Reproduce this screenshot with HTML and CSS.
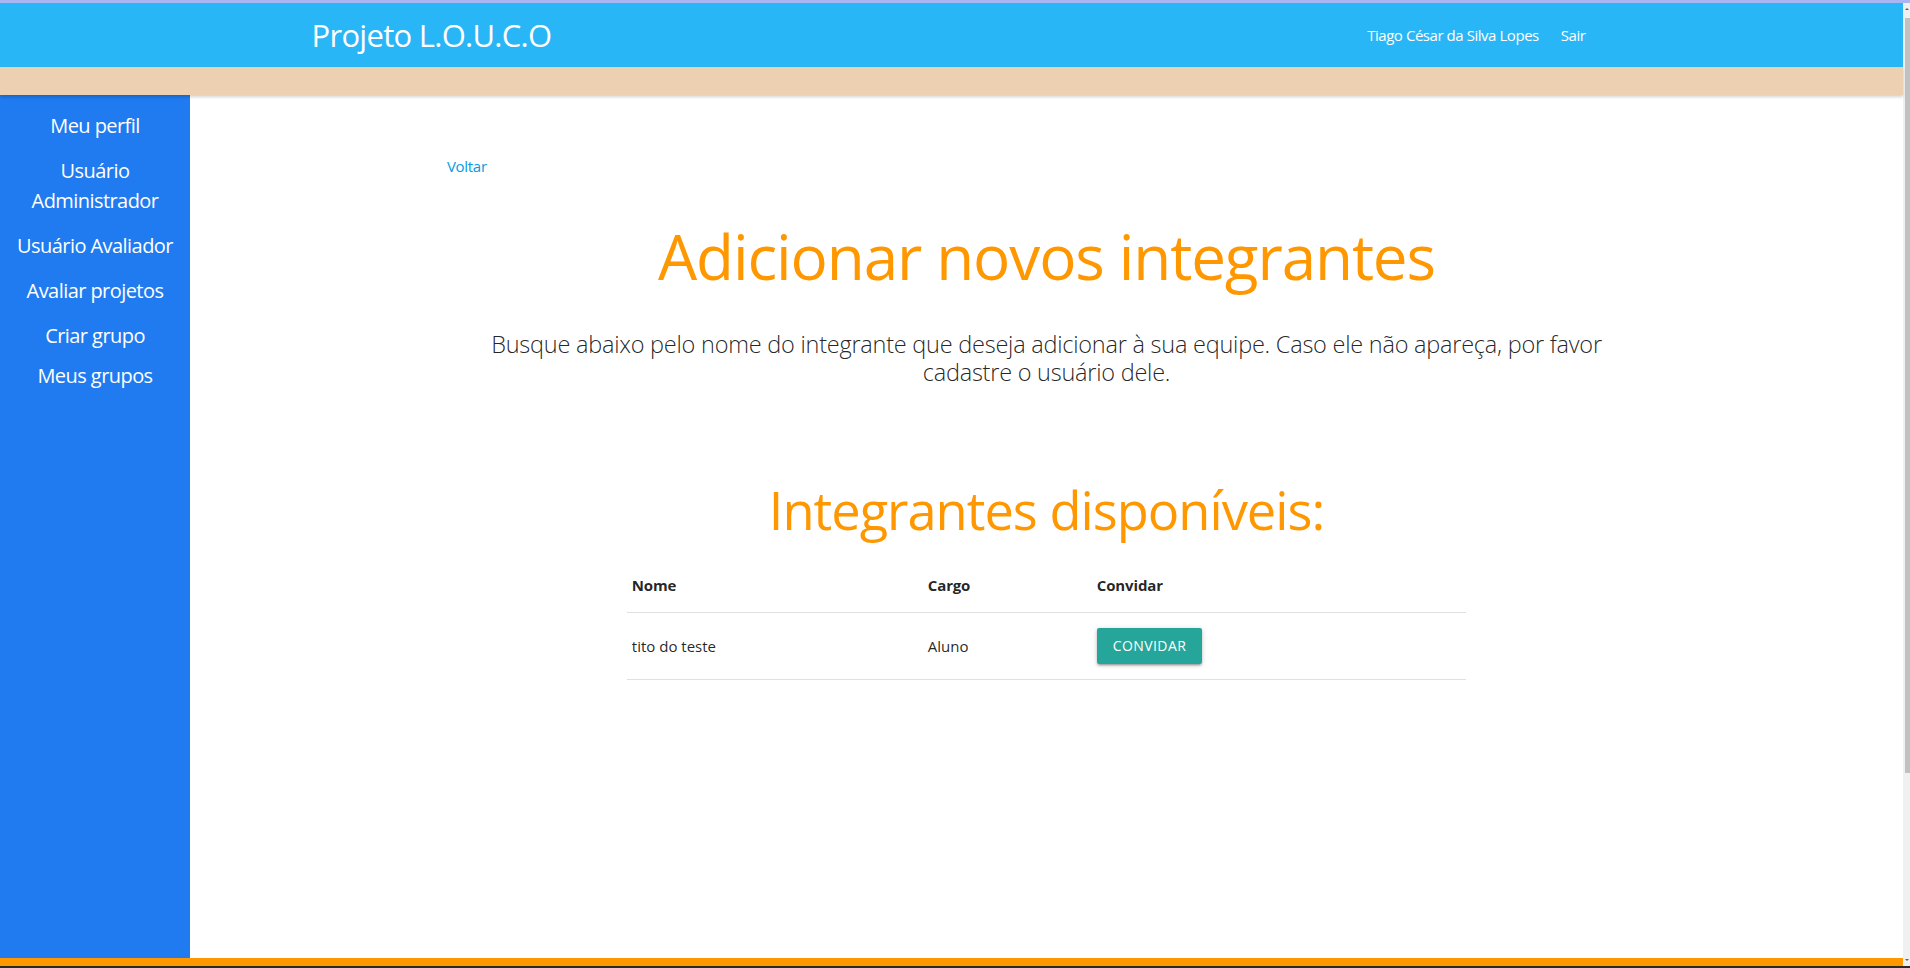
FILE: index.html
```html
<!DOCTYPE html>
<html lang="pt-BR">
<head>
<meta charset="utf-8">
<title>Projeto L.O.U.C.O</title>
<link rel="stylesheet" href="styles.css">
</head>
<body>
<div class="topline"></div>
<div class="frame">
  <div class="page">
    <nav class="navbar">
      <div class="nav-inner">
        <a class="brand" href="#">Projeto L.O.U.C.O</a>
        <ul class="nav-links">
          <li><a href="#">Tiago César da Silva Lopes</a></li>
          <li><a href="#">Sair</a></li>
        </ul>
      </div>
    </nav>
    <div class="subbar"></div>
    <div class="middle">
      <aside class="sidebar">
        <ul class="side-menu">
          <li><a href="#">Meu perfil</a></li>
          <li><a href="#">Usuário Administrador</a></li>
          <li><a href="#">Usuário Avaliador</a></li>
          <li><a href="#">Avaliar projetos</a></li>
          <li><a href="#">Criar grupo</a></li>
          <li class="side-last"><a href="#">Meus grupos</a></li>
        </ul>
      </aside>
      <main class="main">
        <div class="container">
          <a class="back" href="#">Voltar</a>
          <h1 class="title">Adicionar novos integrantes</h1>
          <p class="lead">Busque abaixo pelo nome do integrante que deseja adicionar à sua equipe. Caso ele não apareça, por favor<br>cadastre o usuário dele.</p>
          <h2 class="subtitle">Integrantes disponíveis:</h2>
          <table class="members">
            <thead>
              <tr><th class="col-name">Nome</th><th class="col-role">Cargo</th><th>Convidar</th></tr>
            </thead>
            <tbody>
              <tr><td>tito do teste</td><td>Aluno</td><td><a class="btn" href="#">Convidar</a></td></tr>
            </tbody>
          </table>
        </div>
      </main>
    </div>
    <footer class="footer"></footer>
  </div>
  <div class="scrollbar">
    <div class="sb-arrow sb-up"></div>
    <div class="sb-track"><div class="sb-thumb"></div></div>
    <div class="sb-arrow sb-down"></div>
  </div>
</div>
<div class="taskbar"></div>
</body>
</html>
```
FILE: styles.css
```css
* { box-sizing: border-box; }
html, body { height: 100%; }
body {
  margin: 0;
  height: 968px;
  overflow: hidden;
  display: flex;
  flex-direction: column;
  font-family: "Open Sans", "Noto Sans", sans-serif;
  color: rgba(0,0,0,0.87);
  background: #fff;
}
a { text-decoration: none; }

.topline { height: 3px; background: #aab6f2; flex: none; }
.taskbar { height: 2px; background: #2a2a2a; flex: none; }

.frame { flex: 1; display: flex; min-height: 0; }
.page { flex: 1; display: flex; flex-direction: column; min-width: 0; }

.navbar { height: 64px; background: #29b6f6; flex: none; }
.nav-inner {
  max-width: 1280px;
  width: 70%;
  margin: 0 auto;
  height: 64px;
  display: flex;
  align-items: center;
  justify-content: space-between;
}
.brand {
  color: #fff;
  font-size: 31px;
  line-height: 64px;
  letter-spacing: -0.023em;
}
.nav-links {
  list-style: none;
  margin: 0;
  padding: 0 6px 0 0;
  display: flex;
  gap: 22px;
}
.nav-links a {
  color: #fff;
  font-size: 15px;
  line-height: 64px;
  letter-spacing: -0.03em;
  display: block;
}

.subbar {
  height: 28px;
  background: #ecd0b1;
  flex: none;
  position: relative;
  z-index: 2;
  box-shadow: 0 2px 3px rgba(0,0,0,0.18);
}

.middle { flex: 1; display: flex; min-height: 0; }
.sidebar { width: 190px; flex: none; background: #1f7bef; }
.side-menu {
  list-style: none;
  margin: 0;
  padding: 15.5px 10px 0;
  text-align: center;
}
.side-menu li { font-size: 20px; line-height: 30px; letter-spacing: -0.028em; }
.side-menu li + li { margin-top: 15px; }
.side-menu li.side-last { margin-top: 10px; }
.side-menu a { color: #fff; }

.main { flex: 1; padding-top: 60px; min-width: 0; }
.container { width: 70%; margin: 0 auto; }
.back {
  display: block;
  color: #039be5;
  font-size: 15px;
  line-height: 22.5px;
  letter-spacing: -0.02em;
}
.title {
  margin: 40px 0 0;
  text-align: center;
  color: #ff9800;
  font-weight: 400;
  font-size: 62px;
  line-height: 76px;
  letter-spacing: -0.018em;
}
.lead {
  margin: 36px 0 0;
  text-align: center;
  font-weight: 300;
  font-size: 23.5px;
  line-height: 28.4px;
  letter-spacing: -0.01em;
}
.subtitle {
  margin: 92px 0 0;
  text-align: center;
  color: #ff9800;
  font-weight: 400;
  font-size: 52.4px;
  line-height: 64px;
  letter-spacing: -0.019em;
}
.members {
  width: 70%;
  margin: 17px auto 0;
  border-collapse: collapse;
  font-size: 15px;
  line-height: 22.5px;
}
.members th, .members td {
  padding: 15px 5px;
  text-align: left;
  vertical-align: middle;
  border-bottom: 1px solid rgba(0,0,0,0.12);
}
.members th { font-weight: 700; letter-spacing: -0.01em; }
.col-name { width: 296px; }
.col-role { width: 169px; }
.btn {
  display: inline-block;
  height: 36px;
  line-height: 36px;
  padding: 0 16px;
  background: #26a69a;
  color: #fff;
  font-size: 14px;
  letter-spacing: .4px;
  text-transform: uppercase;
  border-radius: 2px;
  vertical-align: middle;
  box-shadow: 0 2px 2px 0 rgba(0,0,0,.14), 0 3px 1px -2px rgba(0,0,0,.12), 0 1px 5px 0 rgba(0,0,0,.2);
}

.footer { height: 8px; background: #ff9800; flex: none; }

.scrollbar {
  width: 7px;
  flex: none;
  background: #f0f0f0;
  display: flex;
  flex-direction: column;
}
.sb-arrow { height: 12px; flex: none; display: flex; justify-content: center; align-items: center; }
.sb-up::before {
  content: "";
  border-left: 2px solid transparent;
  border-right: 2px solid transparent;
  border-bottom: 2px solid #606060;
}
.sb-down::before {
  content: "";
  border-left: 2px solid transparent;
  border-right: 2px solid transparent;
  border-top: 2px solid #606060;
}
.sb-track { flex: 1; padding: 3px 0 0 2px; }
.sb-thumb { height: 755px; background: #c1c1c1; }
```
